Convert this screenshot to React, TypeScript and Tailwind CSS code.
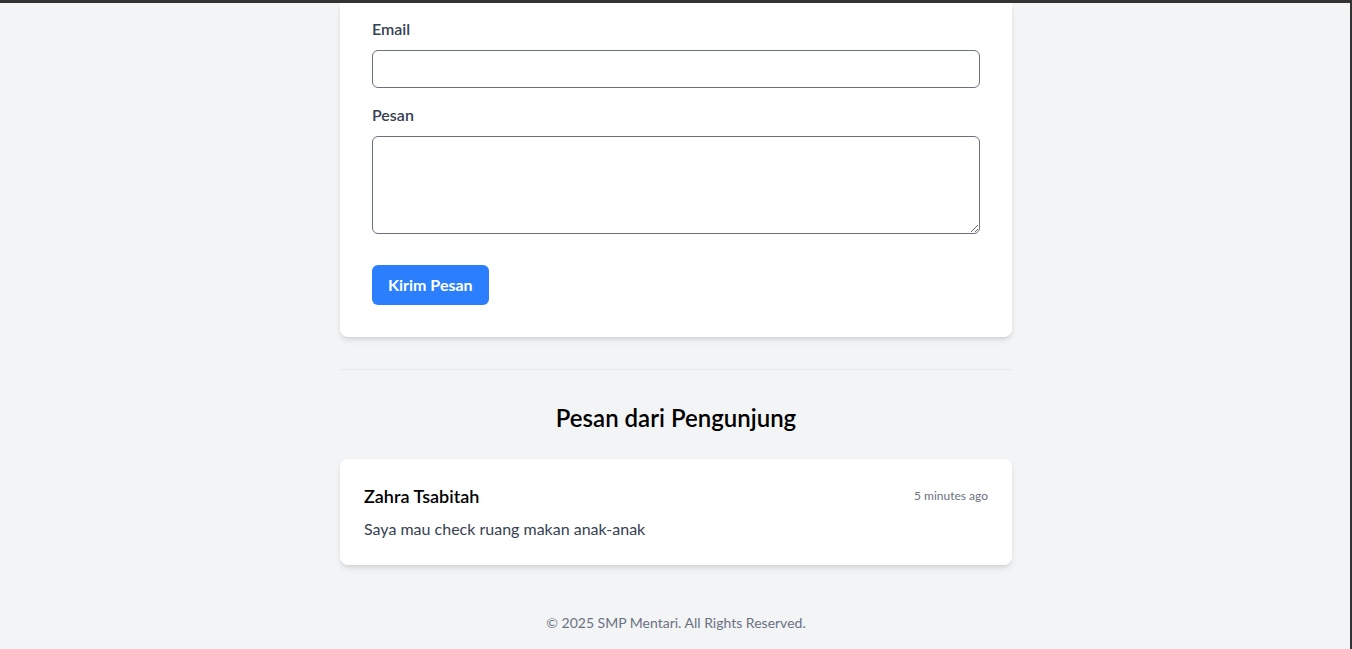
export default function App() {
  return (
    <div
      className="relative h-screen overflow-hidden flex flex-col bg-gray-100"
      style={{ fontFamily: "Lato, 'Noto Sans', sans-serif" }}
    >
      {/* верхняя полоска окна */}
      <div className="h-[3px] bg-[#333333] shrink-0" />
      <div className="flex-1 flex flex-col items-center">
        <main className="w-full max-w-2xl pb-8">
          {/* форма */}
          <div className="bg-white rounded-b-lg shadow-md px-8 pt-[14px] pb-8">
            <div className="mb-[15px]">
              <label className="block text-gray-700 font-semibold mb-[9px]">Email</label>
              <input
                type="email"
                className="w-full border border-gray-500 rounded-md px-3 py-2 text-sm"
              />
            </div>
            <div className="mb-[25px]">
              <label className="block text-gray-700 font-semibold mb-[9px]">Pesan</label>
              <textarea
                rows={4}
                className="w-full border border-gray-500 rounded-md px-3 py-2 text-sm"
              />
            </div>
            <button className="bg-blue-500 text-white font-bold px-4 py-2 rounded-md">
              Kirim Pesan
            </button>
          </div>

          <hr className="my-8 border-gray-200" />

          <h2 className="text-2xl font-semibold text-center text-black mb-[25px]">
            Pesan dari Pengunjung
          </h2>

          <div className="bg-white rounded-lg shadow-md px-6 pt-[23px] pb-6">
            <div className="flex items-center justify-between mb-[7px]">
              <h3 className="text-lg font-semibold text-black">Zahra Tsabitah</h3>
              <span className="text-xs text-gray-500">5 minutes ago</span>
            </div>
            <p className="text-gray-700">Saya mau check ruang makan anak-anak</p>
          </div>
        </main>
        <footer className="py-4 text-center text-sm text-gray-500">
          © 2025 SMP Mentari. All Rights Reserved.
        </footer>
      </div>
      {/* правая рамка окна */}
      <div className="absolute top-0 right-0 bottom-0 w-[2px] bg-[#333333]" />
    </div>
  )
}
